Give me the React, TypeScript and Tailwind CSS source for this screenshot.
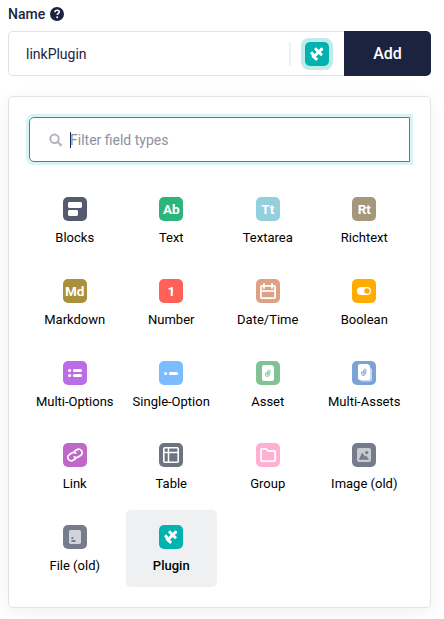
import type { ReactNode } from "react";

const Glyph = ({ children }: { children: ReactNode }) => (
  <svg viewBox="0 0 24 24" className="block size-6" fill="none">
    {children}
  </svg>
);

const PluginGlyph = () => (
  <Glyph>
    <g stroke="#fff">
      <path d="M10 6.3 17 13.3" strokeWidth="3" />
      <path d="M16.5 7.2 9.4 14.3" strokeWidth="3" />
      <path d="M6.1 10.3 7.9 12.2Q7.6 14.2 9.3 15.4L12.2 17.9" strokeWidth="2.9" />
    </g>
    <circle cx="16.5" cy="7.2" r="1.6" fill="#fff" />
  </Glyph>
);

const Letters = ({ children }: { children: ReactNode }) => (
  <span className="text-[13.5px] leading-6 font-bold text-white">{children}</span>
);

const PaperClip = ({ color }: { color: string }) => (
  <path
    d="M10 11.7 L9.5 13.2 A1.9 1.9 0 0 0 13 14.5 L14.2 10.6 A1.25 1.25 0 0 0 11.9 9.8 L10.9 13.2 A.55 .55 0 0 0 12 13.5 L12.7 11"
    stroke={color}
    strokeWidth=".8"
    strokeLinecap="round"
  />
);

const fields: { label: string; bg: string; icon: ReactNode; selected?: boolean }[] = [
  {
    label: "Blocks",
    bg: "bg-[#555a6e]",
    icon: (
      <Glyph>
        <rect x="5" y="5" width="14" height="6" rx="1.4" fill="#fff" />
        <rect x="5" y="13" width="10" height="6" rx="1.4" fill="#fff" />
      </Glyph>
    ),
  },
  { label: "Text", bg: "bg-[#2db47d]", icon: <Letters>Ab</Letters> },
  { label: "Textarea", bg: "bg-[#93cfdc]", icon: <Letters>Tt</Letters> },
  { label: "Richtext", bg: "bg-[#a6967c]", icon: <Letters>Rt</Letters> },
  { label: "Markdown", bg: "bg-[#a9903d]", icon: <Letters>Md</Letters> },
  { label: "Number", bg: "bg-[#ff6159]", icon: <Letters>1</Letters> },
  {
    label: "Date/Time",
    bg: "bg-[#dea184]",
    icon: (
      <Glyph>
        <rect x="4.9" y="6.9" width="14.2" height="12.2" rx="1" stroke="#fff" strokeWidth="1.8" />
        <path d="M5 12h14" stroke="#fff" strokeWidth="1.7" />
        <path d="M8 4.8V9M16 4.8V9" stroke="#fff" strokeWidth="1.8" strokeLinecap="round" />
      </Glyph>
    ),
  },
  {
    label: "Boolean",
    bg: "bg-[#ffab00]",
    icon: (
      <Glyph>
        <rect x="5" y="8" width="14" height="8" rx="4" fill="#fff" />
        <circle cx="15" cy="12" r="2.8" fill="#ffab00" />
      </Glyph>
    ),
  },
  {
    label: "Multi-Options",
    bg: "bg-[#bb6de7]",
    icon: (
      <Glyph>
        <circle cx="6.6" cy="9.5" r="1.6" fill="#fff" />
        <circle cx="6.6" cy="14.5" r="1.6" fill="#fff" />
        <path d="M11.4 9.5h6.2M11.4 14.5h6.2" stroke="#fff" strokeWidth="3" strokeLinecap="round" />
      </Glyph>
    ),
  },
  {
    label: "Single-Option",
    bg: "bg-[#7bbbff]",
    icon: (
      <Glyph>
        <circle cx="6.6" cy="12.5" r="1.6" fill="#fff" />
        <path d="M11.4 12.5h6.2" stroke="#fff" strokeWidth="3" strokeLinecap="round" />
      </Glyph>
    ),
  },
  {
    label: "Asset",
    bg: "bg-[#82c290]",
    icon: (
      <Glyph>
        <path d="M8 4h7.6q.6 0 1 .5l.9 1q.5.5.5 1.2V18a2 2 0 0 1-2 2H8a2 2 0 0 1-2-2V6a2 2 0 0 1 2-2Z" fill="#fff" />
        <PaperClip color="#69b47a" />
      </Glyph>
    ),
  },
  {
    label: "Multi-Assets",
    bg: "bg-[#7aa3d6]",
    icon: (
      <Glyph>
        <path d="M9 6h8.5L20 8.5V18a2.5 2.5 0 0 1-2.5 2.5H10A2 2 0 0 1 8 18.5Z" fill="#c9daef" />
        <path d="M8 3h7.6q.6 0 1 .5l.9 1q.5.5.5 1.2V17a2 2 0 0 1-2 2H8a2 2 0 0 1-2-2V5a2 2 0 0 1 2-2Z" fill="#fff" />
        <g transform="translate(0 -1)">
          <PaperClip color="#5e8fcc" />
        </g>
      </Glyph>
    ),
  },
  {
    label: "Link",
    bg: "bg-[#bf68c8]",
    icon: (
      <Glyph>
        <g transform="rotate(-32 12 12)" stroke="#fff" strokeWidth="1.8" strokeLinecap="round">
          <path d="M10.4 15.4H7.6a3.4 3.4 0 0 1 0-6.8h2.8a3.4 3.4 0 0 1 3.2 2.2" />
          <path d="M13.6 8.6h2.8a3.4 3.4 0 0 1 0 6.8h-2.8a3.4 3.4 0 0 1-3.2-2.2" />
        </g>
      </Glyph>
    ),
  },
  {
    label: "Table",
    bg: "bg-[#6e7380]",
    icon: (
      <Glyph>
        <rect x="4.8" y="4.8" width="14.4" height="14.4" rx="1" stroke="#fff" strokeWidth="1.6" />
        <path d="M5 9.5h14M9.5 5v14" stroke="#fff" strokeWidth="1.5" />
      </Glyph>
    ),
  },
  {
    label: "Group",
    bg: "bg-[#ffafd2]",
    icon: (
      <Glyph>
        <path
          d="M5 6.9c0-.7.4-1.1 1.1-1.1h3.5c.5 0 .8.2 1 .5l.9 1.2c.2.3.5.5 1 .5h5.4c.8 0 1.3.5 1.3 1.3v7.5c0 .8-.5 1.3-1.3 1.3H6.3C5.5 18.1 5 17.6 5 16.8Z"
          stroke="#fff"
          strokeWidth="1.8"
        />
      </Glyph>
    ),
  },
  {
    label: "Image (old)",
    bg: "bg-[#777c8d]",
    icon: (
      <Glyph>
        <rect x="5" y="5" width="14" height="14" rx="2" fill="#c9cbd1" />
        <path d="m6.8 16.8 3.4-7.2 2.8 4.1 1.2-1.3 2.8 4.4Z" fill="#777c8d" />
        <circle cx="14.7" cy="9.5" r="1.6" fill="#777c8d" />
      </Glyph>
    ),
  },
  {
    label: "File (old)",
    bg: "bg-[#777c8d]",
    icon: (
      <Glyph>
        <rect x="6" y="5" width="12" height="14" rx="1.8" fill="#d2d4d9" />
        <rect x="8.4" y="12" width="2" height="2" rx=".4" fill="#777c8d" />
        <rect x="8.4" y="15" width="4.2" height="2" rx=".4" fill="#777c8d" />
      </Glyph>
    ),
  },
  { label: "Plugin", bg: "bg-[#00b3b0]", icon: <PluginGlyph />, selected: true },
];

export default function App() {
  return (
    <div className="h-[619px] w-[444px] overflow-hidden bg-white px-2 pt-1 font-['Roboto',sans-serif] text-[#1b243f]">
      <label className="flex h-5 items-center gap-[5px] text-sm leading-5 font-medium">
        Name
        <svg viewBox="0 0 14 14" className="size-[14px]" fill="none">
          <circle cx="7" cy="7" r="7" fill="#1b243f" />
          <path
            d="M4.9 5.2C5 3.8 5.9 3.2 7.1 3.2c1.3 0 2.2.7 2.2 1.8 0 1.4-2 1.5-2 3"
            stroke="#fff"
            strokeWidth="1.5"
          />
          <circle cx="7.2" cy="10.2" r="1" fill="#fff" />
        </svg>
      </label>

      <div className="mt-[7px] flex h-[45px] w-[423px]">
        <div className="flex flex-1 items-center rounded-l-[5px] border border-r-0 border-[#dfe3e8] pl-[17px] text-sm">
          <span className="flex-1">linkPlugin</span>
          <span className="mr-[10px] h-6 w-[2px] bg-[#eff1f5]" />
          <span className="mr-[11px] rounded-lg bg-[#bfecea] p-1">
            <span className="block rounded-[5px] bg-[#00b3b0]">
              <PluginGlyph />
            </span>
          </span>
        </div>
        <button className="w-[87px] rounded-r-[5px] bg-[#1b243f] text-base font-medium text-white">
          Add
        </button>
      </div>

      <div className="mt-5 h-[512px] w-[423px] rounded-[5px] border border-[#dfe3e8] bg-white px-5 pt-5 shadow-[0_5px_20px_rgba(0,0,0,0.06)]">
        <div className="flex h-[45px] w-[381px] items-center rounded-l-[5px] border border-[#00a5a8] pl-[19px] text-sm text-[#8d919f] shadow-[0_0_0_3px_#d9f4f3]">
          <svg viewBox="0 0 14 14" className="mr-[7px] size-[14px]" fill="none">
            <circle cx="5.5" cy="5.8" r="4.2" stroke="#b1b5be" strokeWidth="2" />
            <path d="m8.7 9 3.2 3.2" stroke="#b1b5be" strokeWidth="2.3" strokeLinecap="round" />
          </svg>
          <span className="-mr-px h-4 w-px bg-[#1b243f]" />
          <span>Filter field types</span>
        </div>

        <div className="mt-5 grid w-[381px] grid-cols-4 gap-[5px]">
          {fields.map((field) => (
            <div
              key={field.label}
              className={
                "flex h-[77px] flex-col items-center rounded-[5px] pt-[15px] text-[13px] whitespace-nowrap " +
                (field.selected ? "bg-[#eff0f2] font-medium text-black" : "text-black")
              }
            >
              <span className={"flex size-6 items-center justify-center rounded-[5px] " + field.bg}>
                {field.icon}
              </span>
              <span className="mt-[7px] leading-5">{field.label}</span>
            </div>
          ))}
        </div>
      </div>
    </div>
  );
}
